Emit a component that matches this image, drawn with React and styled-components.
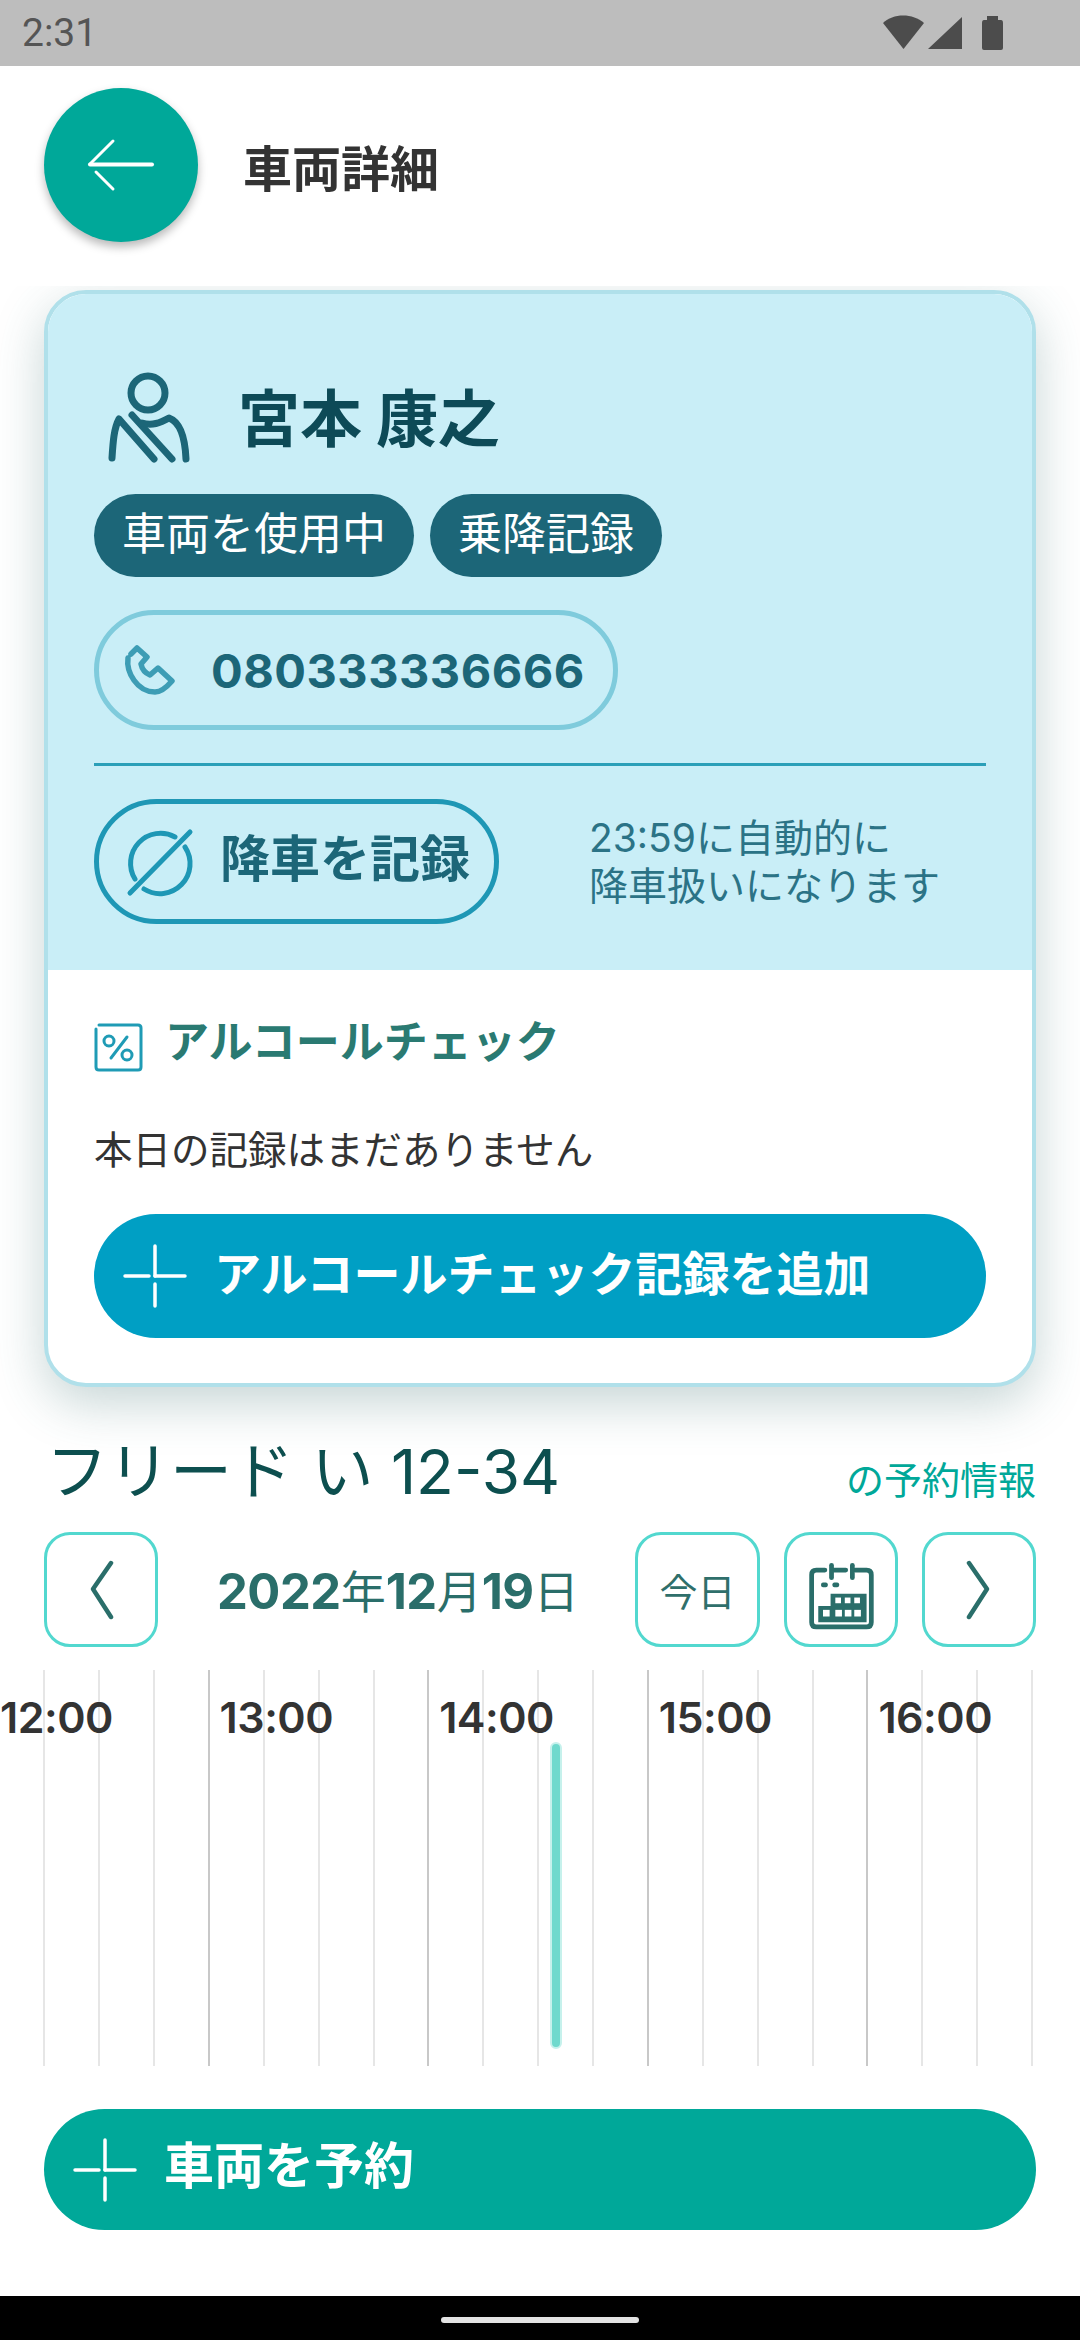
import styled, { createGlobalStyle } from "styled-components";

const GlobalStyle = createGlobalStyle`
  html, body {
    margin: 0;
    padding: 0;
    background: #fff;
  }
  * {
    box-sizing: border-box;
  }
`;

const FONT = `Inter, "Noto Sans CJK JP", sans-serif`;
const JP = `"Noto Sans CJK JP", sans-serif`;
const TEAL = "#00a899";

const Page = styled.div`
  width: 1080px;
  height: 2340px;
  display: flex;
  flex-direction: column;
  overflow: hidden;
  background: #fff;
  font-family: ${FONT};
`;

const StatusBar = styled.div`
  height: 66px;
  flex: none;
  background: #bdbdbd;
  display: flex;
  align-items: center;
  justify-content: space-between;
  padding: 0 77px 0 22px;
  color: #555;
  font: 400 39px Roboto, sans-serif;
`;

const Header = styled.header`
  height: 220px;
  flex: none;
  display: flex;
  align-items: flex-start;
  padding: 22px 0 0 44px;
  gap: 45px;
`;

const BackButton = styled.div`
  width: 154px;
  height: 154px;
  border-radius: 50%;
  background: ${TEAL};
  box-shadow: 0 5px 10px rgba(0, 0, 0, 0.28);
  display: flex;
  align-items: center;
  justify-content: center;
`;

const PageTitle = styled.h1`
  margin: 0;
  font: 700 49px/155px ${JP};
  color: #333;
`;

const Main = styled.main`
  flex: 1;
  overflow: hidden;
  padding: 4px 44px 0;
  display: flex;
  flex-direction: column;
`;

const Card = styled.section`
  flex: none;
  border: 4px solid #b0e0ea;
  border-radius: 42px;
  overflow: hidden;
  background: #fff;
  box-shadow: 0 16px 50px rgba(50, 105, 105, 0.28);
`;

const DriverPanel = styled.div`
  background: #c9eef7;
  padding: 66px 46px 46px;
  display: flex;
  flex-direction: column;
  align-items: flex-start;
`;

const DriverRow = styled.div`
  display: flex;
  align-items: center;
  gap: 28px;
  height: 120px;
  margin-left: -4px;
`;

const DriverName = styled.div`
  font: 700 62px/1 ${JP};
  color: #0d4a57;
  margin-bottom: 10px;
`;

const Tags = styled.div`
  display: flex;
  gap: 16px;
  margin-top: 14px;
`;

const Tag = styled.span`
  height: 83px;
  padding: 0 28px;
  border-radius: 42px;
  background: #1c6678;
  color: #fff;
  font: 400 44px/75px ${JP};
`;

const PhonePill = styled.div`
  width: 524px;
  height: 120px;
  margin-top: 33px;
  border: 5px solid #7fcbdc;
  border-radius: 60px;
  display: flex;
  align-items: center;
  padding-left: 21px;
  gap: 31px;
  color: #1c6678;
  font: 700 47px/1 ${FONT};
  letter-spacing: 0.5px;
`;

const Divider = styled.div`
  align-self: stretch;
  height: 3px;
  margin-top: 33px;
  background: #2a9fb8;
`;

const DropOffRow = styled.div`
  display: flex;
  align-items: center;
  margin-top: 33px;
  gap: 90px;
`;

const DropOffButton = styled.div`
  width: 405px;
  height: 125px;
  border: 5px solid #1e97b5;
  border-radius: 63px;
  display: flex;
  align-items: center;
  padding-left: 16px;
  gap: 15px;
  color: #1c6678;
  font: 700 50px/1 ${JP};
`;

const DropOffNote = styled.div`
  font: 400 39px/48px ${FONT};
  color: #2b7386;
`;

const AlcoholPanel = styled.div`
  padding: 40px 46px 45px;
`;

const AlcoholHeading = styled.div`
  display: flex;
  align-items: center;
  gap: 10px;
  height: 70px;
  margin-left: -9px;
  font: 700 44px/1 ${JP};
  color: #2a7a72;
`;

const Notice = styled.p`
  margin: 42px 0 0;
  font: 400 38.5px/50px ${JP};
  color: #333;
`;

const PrimaryButton = styled.div`
  display: flex;
  align-items: center;
  color: #fff;
  font-family: ${JP};
  font-weight: 700;
  background: ${(p) => (p.$tone === "teal" ? TEAL : "#009fc4")};
  height: ${(p) => (p.$tone === "teal" ? 121 : 124)}px;
  border-radius: 62px;
  font-size: ${(p) => (p.$tone === "teal" ? 50 : 47)}px;
  padding-left: 29px;
  gap: ${(p) => (p.$tone === "teal" ? 27 : 27)}px;
  margin-top: ${(p) => (p.$tone === "teal" ? 0 : 42)}px;
`;

// the reference text sits a little higher than Noto does in the same box
const LiftedLabel = styled.span`
  margin-bottom: ${(p) => p.$lift}px;
`;

const VehicleRow = styled.div`
  display: flex;
  align-items: baseline;
  justify-content: space-between;
  margin-top: 45px;
`;

const VehicleName = styled.div`
  font: 400 62px/80px ${FONT};
  color: #0d4f4f;
  padding-left: 2px;
`;

const VehicleSuffix = styled.div`
  font: 400 38px/1 ${JP};
  color: ${TEAL};
`;

const DateRow = styled.div`
  display: flex;
  align-items: center;
  margin-top: 20px;
`;

const NavButton = styled.div`
  flex: none;
  width: ${(p) => p.$width || 114}px;
  height: 115px;
  margin-left: ${(p) => p.$gap || 0}px;
  border: 3px solid #52d8cf;
  border-radius: 26px;
  display: flex;
  align-items: center;
  justify-content: center;
  font: 400 38px/1 ${JP};
  color: #2f6f6b;
`;

const DateLabel = styled.div`
  flex: 1;
  padding: 4px 0 0 59px;
  font: 700 49px/1 ${FONT};
  letter-spacing: -0.5px;
  color: #2a6e6a;

  span {
    font: 400 45px/1 ${JP};
    letter-spacing: 0;
  }
`;

const Timeline = styled.div`
  position: relative;
  flex: none;
  height: 396px;
  margin: 23px -44px 0;
  display: flex;
  overflow: hidden;
`;

const HourColumn = styled.div`
  flex: none;
  width: 219.6px;
  padding: 23px 0 0 10px;
  margin-left: ${(p) => (p.$first ? -12 : 0)}px;
  border-left: 2px solid #c8c8c8;
  background: repeating-linear-gradient(
    to right,
    transparent 0,
    transparent 52.9px,
    #e6e6e6 52.9px,
    #e6e6e6 54.9px
  );
  font: 600 43px/48px ${FONT};
  letter-spacing: -0.5px;
  color: #333;
`;

const NowMarker = styled.div`
  position: absolute;
  left: 550px;
  top: 72px;
  width: 12px;
  height: 307px;
  border-radius: 6px;
  background: #6fd9cd;
  border: 2px solid #c6f1ec;
`;

const Footer = styled.div`
  flex: none;
  padding: 43px 44px 66px;
`;

const GestureBar = styled.div`
  flex: none;
  height: 44px;
  background: #000;
  display: flex;
  align-items: flex-start;
  justify-content: center;
  padding-top: 21px;
`;

const GestureHandle = styled.div`
  width: 198px;
  height: 6px;
  border-radius: 3px;
  background: #e3e3e3;
`;

const StatusIcons = () => (
  <svg width="120" height="36" viewBox="0 0 120 36" fill="#4c4c4c">
    <path d="M0 8 C10 -2 30 -2 41 8 L20.5 34 Z" />
    <path d="M45 34 L79 2 V34 Z" />
    <path d="M104 1 H115 V5 H118 Q120 5 120 8 V33 Q120 35 118 35 H101 Q99 35 99 33 V8 Q99 5 101 5 H104 Z" />
  </svg>
);

const BackArrow = () => (
  <svg width="154" height="154" viewBox="0 0 154 154" fill="none" stroke="#fff" strokeLinecap="round">
    <path d="M46 76.5 H108" strokeWidth="4" />
    <path d="M69 53 L46 76" strokeWidth="3" />
    <path d="M52 84 L69 101" strokeWidth="3" />
  </svg>
);

const PersonIcon = () => (
  <svg width="120" height="120" viewBox="0 0 120 120" fill="none" stroke="#1c6678" strokeWidth="7" strokeLinecap="round" strokeLinejoin="round">
    <circle cx="58" cy="33" r="17" />
    <path d="M22 98 C23 82 24 68 29 59 L64 99" />
    <path d="M42 55 L82 99" />
    <path d="M52 63 C62 66 70 63 79 58 C90 62 95 76 96 99" />
  </svg>
);

const PhoneIcon = () => (
  <svg width="60" height="60" viewBox="33 20 60 60" fill="none" stroke="#3d9db5" strokeWidth="5.5" strokeLinejoin="round" strokeLinecap="round">
    <path d="M41 38 C39 52 50 72 68 72 C74 72 79 68 85 61 L71 48 L63 55 C58 53 55 49 54 44 L60 37 L50 28 L44 34" />
  </svg>
);

const NoEntryIcon = () => (
  <svg width="90" height="90" viewBox="0 0 90 90" fill="none" stroke="#1e97b5" strokeWidth="5" strokeLinecap="round">
    <path d="M20 62 A30 30 0 0 1 60 20" />
    <path d="M70 30 A30 30 0 0 1 29 72" />
    <path d="M15 76 L75 15" />
  </svg>
);

const PercentIcon = () => (
  <svg width="70" height="70" viewBox="0 0 70 70" fill="none" stroke="#1f9bb5" strokeLinecap="round">
    <path d="M11 19 V57 Q11 60 14 60 H53 Q56 60 56 57 V18 Q56 15 53 15 H14" strokeWidth="3" />
    <circle cx="24" cy="31" r="5" strokeWidth="3" />
    <circle cx="42" cy="45" r="5" strokeWidth="3" />
    <path d="M42 27 L26 48" strokeWidth="3" />
  </svg>
);

const PlusIcon = () => (
  <svg width="64" height="64" viewBox="0 0 64 64" fill="none" stroke="#fff" strokeWidth="3.5" strokeLinecap="round">
    <path d="M2 32 H26" />
    <path d="M32 32 H62" />
    <path d="M32 2 V32" />
    <path d="M32 40 V62" />
  </svg>
);

const Chevron = ({ left }) => (
  <svg width="40" height="60" viewBox="0 0 40 60" fill="none" stroke="#2a6e6a" strokeWidth="4.5" strokeLinecap="round" strokeLinejoin="round">
    <path d={left ? "M30 3 L12 29 L30 57" : "M10 3 L28 29 L10 57"} />
  </svg>
);

const CalendarIcon = () => (
  <svg width="114" height="115" viewBox="0 0 114 115" fill="none">
    <g stroke="#2a6e6a" strokeWidth="5" strokeLinecap="round">
      <path d="M40 37 H31 Q26 37 26 42 V92 Q26 97 31 97 H84 Q89 97 89 92 V42 Q89 37 84 37 H72" />
      <path d="M48 37 H62" />
      <path d="M47 32 V45" />
      <path d="M69 32 V45" />
    </g>
    <rect x="36" y="50" width="7" height="5" rx="2" fill="#2a6e6a" />
    <rect x="48" y="50" width="7" height="5" rx="2" fill="#2a6e6a" />
    <path d="M46 62 H84 V92 H33 V75 H46 Z" fill="#2a6e6a" />
    {[52, 62, 72].map((x) => (
      <rect key={x} x={x - 1} y="66" width="6" height="6" fill="#fff" />
    ))}
    {[38, 51, 61, 71].map((x) => (
      <rect key={x} x={x} y="79" width="7" height="7" fill="#fff" />
    ))}
  </svg>
);

const hours = ["12:00", "13:00", "14:00", "15:00", "16:00"];

export default function App() {
  return (
    <Page>
      <GlobalStyle />
      <StatusBar>
        <span>2:31</span>
        <StatusIcons />
      </StatusBar>
      <Header>
        <BackButton>
          <BackArrow />
        </BackButton>
        <PageTitle>車両詳細</PageTitle>
      </Header>
      <Main>
        <Card>
          <DriverPanel>
            <DriverRow>
              <PersonIcon />
              <DriverName>宮本 康之</DriverName>
            </DriverRow>
            <Tags>
              <Tag>車両を使用中</Tag>
              <Tag>乗降記録</Tag>
            </Tags>
            <PhonePill>
              <PhoneIcon />
              080333336666
            </PhonePill>
            <Divider />
            <DropOffRow>
              <DropOffButton>
                <NoEntryIcon />
                <LiftedLabel $lift={14}>降車を記録</LiftedLabel>
              </DropOffButton>
              <DropOffNote>
                23:59に自動的に
                <br />
                降車扱いになります
              </DropOffNote>
            </DropOffRow>
          </DriverPanel>
          <AlcoholPanel>
            <AlcoholHeading>
              <PercentIcon />
              <LiftedLabel $lift={12}>アルコールチェック</LiftedLabel>
            </AlcoholHeading>
            <Notice>本日の記録はまだありません</Notice>
            <PrimaryButton>
              <PlusIcon />
              <LiftedLabel $lift={12}>アルコールチェック記録を追加</LiftedLabel>
            </PrimaryButton>
          </AlcoholPanel>
        </Card>
        <VehicleRow>
          <VehicleName>フリード い 12-34</VehicleName>
          <VehicleSuffix>の予約情報</VehicleSuffix>
        </VehicleRow>
        <DateRow>
          <NavButton>
            <Chevron left />
          </NavButton>
          <DateLabel>
            2022<span>年</span>12<span>月</span>19<span>日</span>
          </DateLabel>
          <NavButton $width={125}>今日</NavButton>
          <NavButton $gap={24}>
            <CalendarIcon />
          </NavButton>
          <NavButton $gap={24}>
            <Chevron />
          </NavButton>
        </DateRow>
        <Timeline>
          {hours.map((h, i) => (
            <HourColumn key={h} $first={i === 0}>
              {h}
            </HourColumn>
          ))}
          <NowMarker />
        </Timeline>
      </Main>
      <Footer>
        <PrimaryButton $tone="teal">
          <PlusIcon />
          <LiftedLabel $lift={16}>車両を予約</LiftedLabel>
        </PrimaryButton>
      </Footer>
      <GestureBar>
        <GestureHandle />
      </GestureBar>
    </Page>
  );
}
